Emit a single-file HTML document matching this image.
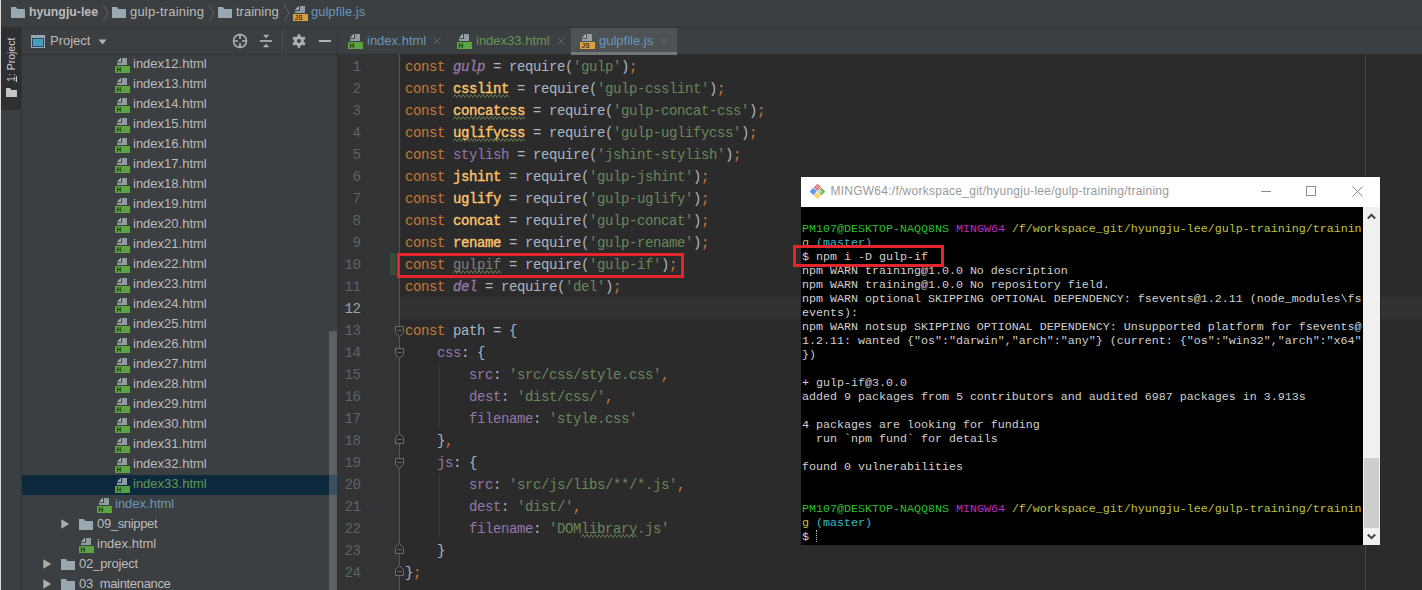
<!DOCTYPE html><html><head><meta charset="utf-8"><title>gulpfile.js</title><style>
*{box-sizing:border-box;margin:0;padding:0}
html,body{width:1422px;height:590px;overflow:hidden;background:#3c3f41}
body{position:relative;font-family:"Liberation Sans","DejaVu Sans",sans-serif;font-size:13px;color:#bbbbbb}
.abs{position:absolute}
#edge{left:0;top:0;width:1px;height:590px;background:#d9d9d9}
#crumbs{left:1px;top:0;width:1421px;height:27px;background:#3c3f41}
#crumbline{left:1px;top:27px;width:1421px;height:1px;background:#323232}
.crumb{position:absolute;top:0;height:24px;line-height:24px;font-size:13px;color:#bbbbbb;white-space:nowrap}
.sep{position:absolute;top:4px}
#strip{left:1px;top:28px;width:20px;height:562px;background:#3c3f41}
#stripsel{left:1px;top:28px;width:20.700px;height:82px;background:#2d2f30}
#striptxt{left:1px;top:28px;width:21px;height:81px}
#striptxt span{position:absolute;left:2.500px;top:54px;transform-origin:0 0;transform:rotate(-90deg);font-size:10.5px;color:#d0d0d0;white-space:nowrap;line-height:15px}
#stripline{left:21px;top:28px;width:1px;height:562px;background:#323232}
#proj{left:22px;top:28px;width:315px;height:562px;background:#3c3f41}
#projhead{left:23px;top:28px;width:314px;height:26px}
#projheadline{left:22px;top:54px;width:315px;height:1px;background:#353739}
.row{position:absolute;left:22px;width:315px;height:20px;line-height:18px;font-size:13px;color:#bbbbbb;white-space:nowrap}
.row.sel{background:#0d293e}
.row .t{position:absolute;top:0}
#scroll{left:329px;top:331px;width:8px;height:259px;background:rgba(166,166,166,0.32)}
#split{left:337px;top:28px;width:1px;height:562px;background:#323232}
#tabs{left:338px;top:28px;width:1084px;height:26px;background:#3c3f41}
#tabline{display:none}
.tab{position:absolute;top:28px;height:26px;line-height:25px;font-size:13px;white-space:nowrap}
.tab .x{position:absolute;top:0}
#editor{left:338px;top:54px;width:1084px;height:536px;background:#2b2b2b}
#gutter{left:338px;top:54px;width:61px;height:536px;background:#313335}
#gutline{left:399px;top:54px;width:1px;height:536px;background:#555555}
#margin{left:1365px;top:54px;width:1px;height:536px;background:#474747}
.ln{position:absolute;left:338px;width:22.400px;text-align:right;height:22px;line-height:22px;font-family:"Liberation Mono","DejaVu Sans Mono",monospace;font-size:14px;letter-spacing:-0.400px;color:#606366}
.cl{position:absolute;left:405px;height:22px;line-height:22px;font-family:"Liberation Mono","DejaVu Sans Mono",monospace;font-size:14px;letter-spacing:-0.4014px;color:#a9b7c6;white-space:pre}
.k{color:#cc7832}.s{color:#6a8759}.p{color:#9876aa}.g{color:#9876aa;font-style:italic;-webkit-text-stroke:0.350px #9876aa}
.y{color:#ffc66d;-webkit-text-stroke:0.350px #ffc66d}.u{color:#808080}
.w{}
#caretrow{left:400px;top:297px;width:1022px;height:22px;background:#323232}
#vcs{left:390px;top:253px;width:6px;height:22px;background:#384c38}
#red1{left:397px;top:252.500px;width:287px;height:25.500px;border:3.500px solid #e3262d}
#term{left:800px;top:176px;width:581px;height:370px;background:#000;border:1px solid #2a2a2a}
#ttitle{left:801px;top:177px;width:579px;height:30px;background:#ffffff}
#ttitle .tt{position:absolute;left:29.400px;top:0;line-height:29px;font-size:12px;letter-spacing:0.260px;color:#999999;white-space:nowrap}
#tbody{left:801px;top:207px;width:562px;height:338px;background:#000}
#tscroll{left:1363px;top:207px;width:17px;height:338px;background:#f0f0f0}
#tthumb{left:1364px;top:458px;width:15px;height:70px;background:#cdcdcd}
.tl{position:absolute;left:802px;height:14px;line-height:14px;font-family:"Liberation Mono","DejaVu Sans Mono",monospace;font-size:11.67px;color:#d0d0d0;white-space:pre}
.tg{color:#2bc02b}.tm{color:#c02bc0}.ty{color:#c2c244}.tc{color:#38bcc6}
#red2{left:793px;top:245px;width:151px;height:22px;border:3.500px solid #e3262d}
</style></head><body>
<div class="abs" id="crumbs"></div><div class="abs" id="crumbline"></div>
<svg class="abs" style="left:11px;top:7px" width="14" height="11" viewBox="0 0 14 11"><path d="M0 0h5l1.500 2H14v9H0z" fill="#9aa7b0"/></svg>
<div class="crumb" style="left:29px;font-weight:bold;font-size:12.3px">hyungju-lee</div>
<svg class="abs" style="left:102px;top:4px" width="7" height="18" viewBox="0 0 7 18"><path d="M1 0.5L6 9L1 17.5" fill="none" stroke="#606264" stroke-width="1"/></svg>
<svg class="abs" style="left:112px;top:7px" width="14" height="11" viewBox="0 0 14 11"><path d="M0 0h5l1.500 2H14v9H0z" fill="#9aa7b0"/></svg>
<div class="crumb" style="left:130px;letter-spacing:0.2px">gulp-training</div>
<svg class="abs" style="left:207.5px;top:4px" width="7" height="18" viewBox="0 0 7 18"><path d="M1 0.5L6 9L1 17.5" fill="none" stroke="#606264" stroke-width="1"/></svg>
<svg class="abs" style="left:218px;top:7px" width="14" height="11" viewBox="0 0 14 11"><path d="M0 0h5l1.500 2H14v9H0z" fill="#9aa7b0"/></svg>
<div class="crumb" style="left:236px">training</div>
<svg class="abs" style="left:283px;top:4px" width="7" height="18" viewBox="0 0 7 18"><path d="M1 0.5L6 9L1 17.5" fill="none" stroke="#606264" stroke-width="1"/></svg>
<svg class="abs" style="left:292px;top:5px" width="16" height="16" viewBox="0 0 16 16"><path d="M8 1H13v7H3V5.800h5z" fill="#9aa7b0" opacity=".9"/><path d="M3 4.800L7 0.800V4.800z" fill="#aeb8bf"/><rect x="1" y="9" width="15" height="7" fill="#f4af3d" opacity=".85"/><text x="2.600" y="15" font-family="Liberation Sans,sans-serif" font-size="6.500" font-weight="bold" fill="#4a3510">JS</text></svg>
<div class="crumb" style="left:311px;color:#6897bb">gulpfile.js</div>
<div class="abs" id="strip"></div><div class="abs" id="stripsel"></div>
<div class="abs" id="striptxt"><span><u>1</u>: Project</span></div>
<svg class="abs" style="left:6px;top:88px" width="11" height="9" viewBox="0 0 11 9"><path d="M0 0h4l1.500 2H11v7H0z" fill="#c4c4c4"/></svg>
<div class="abs" id="stripline"></div>
<div class="abs" id="proj"></div><div class="abs" id="projheadline"></div>
<svg class="abs" style="left:31px;top:35px" width="14" height="13" viewBox="0 0 14 13"><rect x="0" y="0" width="14" height="13" fill="#9aa7b0"/><rect x="1" y="3" width="12" height="9" fill="#234d60"/><rect x="2" y="4" width="10" height="7" fill="#4a9dbd"/></svg>
<div class="abs" style="left:50px;top:28px;line-height:26px;font-size:13px;color:#bbbbbb">Project</div>
<svg class="abs" style="left:98px;top:39px" width="10" height="6" viewBox="0 0 10 6"><path d="M0.5 0.5h8l-4 5z" fill="#afb1b3"/></svg>
<svg class="abs" style="left:232px;top:33px" width="16" height="16" viewBox="0 0 16 16"><circle cx="8" cy="8" r="6.500" fill="none" stroke="#afb1b3" stroke-width="1.500"/><path d="M8 1.500v4.500M8 10v4.500M1.500 8h4.500M10 8h4.500" stroke="#afb1b3" stroke-width="1.700"/></svg>
<svg class="abs" style="left:258px;top:33px" width="16" height="16" viewBox="0 0 16 16"><path d="M2 8h12" stroke="#afb1b3" stroke-width="1.700"/><path d="M5 1.800h6.200l-3.100 3.400z M5 14.200h6.200l-3.100-3.400z" fill="#afb1b3"/></svg>
<div class="abs" style="left:282px;top:30px;width:1px;height:21px;background:#505254"></div>
<svg class="abs" style="left:291px;top:33px" width="16" height="16" viewBox="0 0 16 16"><g transform="translate(8 8)"><circle r="3.400" fill="none" stroke="#afb1b3" stroke-width="2.800"/><g fill="#afb1b3"><path d="M-1.900 -4.300L-1.100 -6.850H1.100L1.900 -4.300z" transform="rotate(0)"/><path d="M-1.900 -4.300L-1.100 -6.850H1.100L1.900 -4.300z" transform="rotate(60)"/><path d="M-1.900 -4.300L-1.100 -6.850H1.100L1.900 -4.300z" transform="rotate(120)"/><path d="M-1.900 -4.300L-1.100 -6.850H1.100L1.900 -4.300z" transform="rotate(180)"/><path d="M-1.900 -4.300L-1.100 -6.850H1.100L1.900 -4.300z" transform="rotate(240)"/><path d="M-1.900 -4.300L-1.100 -6.850H1.100L1.900 -4.300z" transform="rotate(300)"/></g></g></svg>
<div class="abs" style="left:319px;top:40px;width:12px;height:2px;background:#afb1b3"></div>
<div class="row" style="top:55px"><span class="t" style="left:111px;">index12.html</span></div>
<svg class="abs" style="left:114px;top:57px" width="16" height="16" viewBox="0 0 16 16"><path d="M8 1H13v7H3V5.800h5z" fill="#9aa7b0" opacity=".9"/><path d="M3 4.800L7 0.800V4.800z" fill="#aeb8bf"/><rect x="1" y="9" width="15" height="7" fill="#62b543" opacity=".85"/><text x="2.600" y="15" font-family="Liberation Sans,sans-serif" font-size="6.500" font-weight="bold" fill="#1a4210">H</text></svg>
<div class="row" style="top:75px"><span class="t" style="left:111px;">index13.html</span></div>
<svg class="abs" style="left:114px;top:77px" width="16" height="16" viewBox="0 0 16 16"><path d="M8 1H13v7H3V5.800h5z" fill="#9aa7b0" opacity=".9"/><path d="M3 4.800L7 0.800V4.800z" fill="#aeb8bf"/><rect x="1" y="9" width="15" height="7" fill="#62b543" opacity=".85"/><text x="2.600" y="15" font-family="Liberation Sans,sans-serif" font-size="6.500" font-weight="bold" fill="#1a4210">H</text></svg>
<div class="row" style="top:95px"><span class="t" style="left:111px;">index14.html</span></div>
<svg class="abs" style="left:114px;top:97px" width="16" height="16" viewBox="0 0 16 16"><path d="M8 1H13v7H3V5.800h5z" fill="#9aa7b0" opacity=".9"/><path d="M3 4.800L7 0.800V4.800z" fill="#aeb8bf"/><rect x="1" y="9" width="15" height="7" fill="#62b543" opacity=".85"/><text x="2.600" y="15" font-family="Liberation Sans,sans-serif" font-size="6.500" font-weight="bold" fill="#1a4210">H</text></svg>
<div class="row" style="top:115px"><span class="t" style="left:111px;">index15.html</span></div>
<svg class="abs" style="left:114px;top:117px" width="16" height="16" viewBox="0 0 16 16"><path d="M8 1H13v7H3V5.800h5z" fill="#9aa7b0" opacity=".9"/><path d="M3 4.800L7 0.800V4.800z" fill="#aeb8bf"/><rect x="1" y="9" width="15" height="7" fill="#62b543" opacity=".85"/><text x="2.600" y="15" font-family="Liberation Sans,sans-serif" font-size="6.500" font-weight="bold" fill="#1a4210">H</text></svg>
<div class="row" style="top:135px"><span class="t" style="left:111px;">index16.html</span></div>
<svg class="abs" style="left:114px;top:137px" width="16" height="16" viewBox="0 0 16 16"><path d="M8 1H13v7H3V5.800h5z" fill="#9aa7b0" opacity=".9"/><path d="M3 4.800L7 0.800V4.800z" fill="#aeb8bf"/><rect x="1" y="9" width="15" height="7" fill="#62b543" opacity=".85"/><text x="2.600" y="15" font-family="Liberation Sans,sans-serif" font-size="6.500" font-weight="bold" fill="#1a4210">H</text></svg>
<div class="row" style="top:155px"><span class="t" style="left:111px;">index17.html</span></div>
<svg class="abs" style="left:114px;top:157px" width="16" height="16" viewBox="0 0 16 16"><path d="M8 1H13v7H3V5.800h5z" fill="#9aa7b0" opacity=".9"/><path d="M3 4.800L7 0.800V4.800z" fill="#aeb8bf"/><rect x="1" y="9" width="15" height="7" fill="#62b543" opacity=".85"/><text x="2.600" y="15" font-family="Liberation Sans,sans-serif" font-size="6.500" font-weight="bold" fill="#1a4210">H</text></svg>
<div class="row" style="top:175px"><span class="t" style="left:111px;">index18.html</span></div>
<svg class="abs" style="left:114px;top:177px" width="16" height="16" viewBox="0 0 16 16"><path d="M8 1H13v7H3V5.800h5z" fill="#9aa7b0" opacity=".9"/><path d="M3 4.800L7 0.800V4.800z" fill="#aeb8bf"/><rect x="1" y="9" width="15" height="7" fill="#62b543" opacity=".85"/><text x="2.600" y="15" font-family="Liberation Sans,sans-serif" font-size="6.500" font-weight="bold" fill="#1a4210">H</text></svg>
<div class="row" style="top:195px"><span class="t" style="left:111px;">index19.html</span></div>
<svg class="abs" style="left:114px;top:197px" width="16" height="16" viewBox="0 0 16 16"><path d="M8 1H13v7H3V5.800h5z" fill="#9aa7b0" opacity=".9"/><path d="M3 4.800L7 0.800V4.800z" fill="#aeb8bf"/><rect x="1" y="9" width="15" height="7" fill="#62b543" opacity=".85"/><text x="2.600" y="15" font-family="Liberation Sans,sans-serif" font-size="6.500" font-weight="bold" fill="#1a4210">H</text></svg>
<div class="row" style="top:215px"><span class="t" style="left:111px;">index20.html</span></div>
<svg class="abs" style="left:114px;top:217px" width="16" height="16" viewBox="0 0 16 16"><path d="M8 1H13v7H3V5.800h5z" fill="#9aa7b0" opacity=".9"/><path d="M3 4.800L7 0.800V4.800z" fill="#aeb8bf"/><rect x="1" y="9" width="15" height="7" fill="#62b543" opacity=".85"/><text x="2.600" y="15" font-family="Liberation Sans,sans-serif" font-size="6.500" font-weight="bold" fill="#1a4210">H</text></svg>
<div class="row" style="top:235px"><span class="t" style="left:111px;">index21.html</span></div>
<svg class="abs" style="left:114px;top:237px" width="16" height="16" viewBox="0 0 16 16"><path d="M8 1H13v7H3V5.800h5z" fill="#9aa7b0" opacity=".9"/><path d="M3 4.800L7 0.800V4.800z" fill="#aeb8bf"/><rect x="1" y="9" width="15" height="7" fill="#62b543" opacity=".85"/><text x="2.600" y="15" font-family="Liberation Sans,sans-serif" font-size="6.500" font-weight="bold" fill="#1a4210">H</text></svg>
<div class="row" style="top:255px"><span class="t" style="left:111px;">index22.html</span></div>
<svg class="abs" style="left:114px;top:257px" width="16" height="16" viewBox="0 0 16 16"><path d="M8 1H13v7H3V5.800h5z" fill="#9aa7b0" opacity=".9"/><path d="M3 4.800L7 0.800V4.800z" fill="#aeb8bf"/><rect x="1" y="9" width="15" height="7" fill="#62b543" opacity=".85"/><text x="2.600" y="15" font-family="Liberation Sans,sans-serif" font-size="6.500" font-weight="bold" fill="#1a4210">H</text></svg>
<div class="row" style="top:275px"><span class="t" style="left:111px;">index23.html</span></div>
<svg class="abs" style="left:114px;top:277px" width="16" height="16" viewBox="0 0 16 16"><path d="M8 1H13v7H3V5.800h5z" fill="#9aa7b0" opacity=".9"/><path d="M3 4.800L7 0.800V4.800z" fill="#aeb8bf"/><rect x="1" y="9" width="15" height="7" fill="#62b543" opacity=".85"/><text x="2.600" y="15" font-family="Liberation Sans,sans-serif" font-size="6.500" font-weight="bold" fill="#1a4210">H</text></svg>
<div class="row" style="top:295px"><span class="t" style="left:111px;">index24.html</span></div>
<svg class="abs" style="left:114px;top:297px" width="16" height="16" viewBox="0 0 16 16"><path d="M8 1H13v7H3V5.800h5z" fill="#9aa7b0" opacity=".9"/><path d="M3 4.800L7 0.800V4.800z" fill="#aeb8bf"/><rect x="1" y="9" width="15" height="7" fill="#62b543" opacity=".85"/><text x="2.600" y="15" font-family="Liberation Sans,sans-serif" font-size="6.500" font-weight="bold" fill="#1a4210">H</text></svg>
<div class="row" style="top:315px"><span class="t" style="left:111px;">index25.html</span></div>
<svg class="abs" style="left:114px;top:317px" width="16" height="16" viewBox="0 0 16 16"><path d="M8 1H13v7H3V5.800h5z" fill="#9aa7b0" opacity=".9"/><path d="M3 4.800L7 0.800V4.800z" fill="#aeb8bf"/><rect x="1" y="9" width="15" height="7" fill="#62b543" opacity=".85"/><text x="2.600" y="15" font-family="Liberation Sans,sans-serif" font-size="6.500" font-weight="bold" fill="#1a4210">H</text></svg>
<div class="row" style="top:335px"><span class="t" style="left:111px;">index26.html</span></div>
<svg class="abs" style="left:114px;top:337px" width="16" height="16" viewBox="0 0 16 16"><path d="M8 1H13v7H3V5.800h5z" fill="#9aa7b0" opacity=".9"/><path d="M3 4.800L7 0.800V4.800z" fill="#aeb8bf"/><rect x="1" y="9" width="15" height="7" fill="#62b543" opacity=".85"/><text x="2.600" y="15" font-family="Liberation Sans,sans-serif" font-size="6.500" font-weight="bold" fill="#1a4210">H</text></svg>
<div class="row" style="top:355px"><span class="t" style="left:111px;">index27.html</span></div>
<svg class="abs" style="left:114px;top:357px" width="16" height="16" viewBox="0 0 16 16"><path d="M8 1H13v7H3V5.800h5z" fill="#9aa7b0" opacity=".9"/><path d="M3 4.800L7 0.800V4.800z" fill="#aeb8bf"/><rect x="1" y="9" width="15" height="7" fill="#62b543" opacity=".85"/><text x="2.600" y="15" font-family="Liberation Sans,sans-serif" font-size="6.500" font-weight="bold" fill="#1a4210">H</text></svg>
<div class="row" style="top:375px"><span class="t" style="left:111px;">index28.html</span></div>
<svg class="abs" style="left:114px;top:377px" width="16" height="16" viewBox="0 0 16 16"><path d="M8 1H13v7H3V5.800h5z" fill="#9aa7b0" opacity=".9"/><path d="M3 4.800L7 0.800V4.800z" fill="#aeb8bf"/><rect x="1" y="9" width="15" height="7" fill="#62b543" opacity=".85"/><text x="2.600" y="15" font-family="Liberation Sans,sans-serif" font-size="6.500" font-weight="bold" fill="#1a4210">H</text></svg>
<div class="row" style="top:395px"><span class="t" style="left:111px;">index29.html</span></div>
<svg class="abs" style="left:114px;top:397px" width="16" height="16" viewBox="0 0 16 16"><path d="M8 1H13v7H3V5.800h5z" fill="#9aa7b0" opacity=".9"/><path d="M3 4.800L7 0.800V4.800z" fill="#aeb8bf"/><rect x="1" y="9" width="15" height="7" fill="#62b543" opacity=".85"/><text x="2.600" y="15" font-family="Liberation Sans,sans-serif" font-size="6.500" font-weight="bold" fill="#1a4210">H</text></svg>
<div class="row" style="top:415px"><span class="t" style="left:111px;">index30.html</span></div>
<svg class="abs" style="left:114px;top:417px" width="16" height="16" viewBox="0 0 16 16"><path d="M8 1H13v7H3V5.800h5z" fill="#9aa7b0" opacity=".9"/><path d="M3 4.800L7 0.800V4.800z" fill="#aeb8bf"/><rect x="1" y="9" width="15" height="7" fill="#62b543" opacity=".85"/><text x="2.600" y="15" font-family="Liberation Sans,sans-serif" font-size="6.500" font-weight="bold" fill="#1a4210">H</text></svg>
<div class="row" style="top:435px"><span class="t" style="left:111px;">index31.html</span></div>
<svg class="abs" style="left:114px;top:437px" width="16" height="16" viewBox="0 0 16 16"><path d="M8 1H13v7H3V5.800h5z" fill="#9aa7b0" opacity=".9"/><path d="M3 4.800L7 0.800V4.800z" fill="#aeb8bf"/><rect x="1" y="9" width="15" height="7" fill="#62b543" opacity=".85"/><text x="2.600" y="15" font-family="Liberation Sans,sans-serif" font-size="6.500" font-weight="bold" fill="#1a4210">H</text></svg>
<div class="row" style="top:455px"><span class="t" style="left:111px;">index32.html</span></div>
<svg class="abs" style="left:114px;top:457px" width="16" height="16" viewBox="0 0 16 16"><path d="M8 1H13v7H3V5.800h5z" fill="#9aa7b0" opacity=".9"/><path d="M3 4.800L7 0.800V4.800z" fill="#aeb8bf"/><rect x="1" y="9" width="15" height="7" fill="#62b543" opacity=".85"/><text x="2.600" y="15" font-family="Liberation Sans,sans-serif" font-size="6.500" font-weight="bold" fill="#1a4210">H</text></svg>
<div class="row sel" style="top:475px"><span class="t" style="left:111px;color:#629755">index33.html</span></div>
<svg class="abs" style="left:114px;top:477px" width="16" height="16" viewBox="0 0 16 16"><path d="M8 1H13v7H3V5.800h5z" fill="#9aa7b0" opacity=".9"/><path d="M3 4.800L7 0.800V4.800z" fill="#aeb8bf"/><rect x="1" y="9" width="15" height="7" fill="#62b543" opacity=".85"/><text x="2.600" y="15" font-family="Liberation Sans,sans-serif" font-size="6.500" font-weight="bold" fill="#1a4210">H</text></svg>
<div class="row" style="top:495px"><span class="t" style="left:93px;color:#6897bb;">index.html</span></div>
<svg class="abs" style="left:96px;top:497px" width="16" height="16" viewBox="0 0 16 16"><path d="M8 1H13v7H3V5.800h5z" fill="#9aa7b0" opacity=".9"/><path d="M3 4.800L7 0.800V4.800z" fill="#aeb8bf"/><rect x="1" y="9" width="15" height="7" fill="#62b543" opacity=".85"/><text x="2.600" y="15" font-family="Liberation Sans,sans-serif" font-size="6.500" font-weight="bold" fill="#1a4210">H</text></svg>
<div class="row" style="top:515px"><span class="t" style="left:75px;letter-spacing:-0.34px">09_snippet</span></div>
<svg class="abs" style="left:79px;top:519px" width="14" height="11" viewBox="0 0 14 11"><path d="M0 0h5l1.500 2H14v9H0z" fill="#9aa7b0"/></svg>
<svg class="abs" style="left:61px;top:519px" width="9" height="10" viewBox="0 0 9 10"><path d="M0.300 0.300l7.900 4.700l-7.900 4.700z" fill="#adadad"/></svg>
<div class="row" style="top:535px"><span class="t" style="left:75px;">index.html</span></div>
<svg class="abs" style="left:78px;top:537px" width="16" height="16" viewBox="0 0 16 16"><path d="M8 1H13v7H3V5.800h5z" fill="#9aa7b0" opacity=".9"/><path d="M3 4.800L7 0.800V4.800z" fill="#aeb8bf"/><rect x="1" y="9" width="15" height="7" fill="#62b543" opacity=".85"/><text x="2.600" y="15" font-family="Liberation Sans,sans-serif" font-size="6.500" font-weight="bold" fill="#1a4210">H</text></svg>
<div class="row" style="top:555px"><span class="t" style="left:57px;letter-spacing:-0.17px">02_project</span></div>
<svg class="abs" style="left:61px;top:559px" width="14" height="11" viewBox="0 0 14 11"><path d="M0 0h5l1.500 2H14v9H0z" fill="#9aa7b0"/></svg>
<svg class="abs" style="left:43px;top:559px" width="9" height="10" viewBox="0 0 9 10"><path d="M0.300 0.300l7.900 4.700l-7.900 4.700z" fill="#adadad"/></svg>
<div class="row" style="top:575px"><span class="t" style="left:57px;letter-spacing:-0.33px">03_maintenance</span></div>
<svg class="abs" style="left:61px;top:579px" width="14" height="11" viewBox="0 0 14 11"><path d="M0 0h5l1.500 2H14v9H0z" fill="#9aa7b0"/></svg>
<svg class="abs" style="left:43px;top:579px" width="9" height="10" viewBox="0 0 9 10"><path d="M0.300 0.300l7.900 4.700l-7.900 4.700z" fill="#adadad"/></svg>
<div class="abs" id="scroll"></div><div class="abs" id="split"></div>
<div class="abs" id="tabs"></div>
<div class="abs" style="left:571px;top:28px;width:106px;height:24px;background:#4e5254"></div>
<div class="abs" style="left:571px;top:52px;width:106px;height:3px;background:#72777c;z-index:2"></div>
<div class="abs" id="tabline"></div>
<svg class="abs" style="left:347px;top:33px" width="16" height="16" viewBox="0 0 16 16"><path d="M8 1H13v7H3V5.800h5z" fill="#9aa7b0" opacity=".9"/><path d="M3 4.800L7 0.800V4.800z" fill="#aeb8bf"/><rect x="1" y="9" width="15" height="7" fill="#62b543" opacity=".85"/><text x="2.600" y="15" font-family="Liberation Sans,sans-serif" font-size="6.500" font-weight="bold" fill="#1a4210">H</text></svg>
<div class="tab" style="left:367px;color:#6897bb">index.html</div>
<svg class="abs" style="left:433px;top:37px" width="8" height="8" viewBox="0 0 8 8"><path d="M0.500 0.500l7 7M7.500 0.500l-7 7" stroke="#63666a" stroke-width="1"/></svg>
<svg class="abs" style="left:456px;top:33px" width="16" height="16" viewBox="0 0 16 16"><path d="M8 1H13v7H3V5.800h5z" fill="#9aa7b0" opacity=".9"/><path d="M3 4.800L7 0.800V4.800z" fill="#aeb8bf"/><rect x="1" y="9" width="15" height="7" fill="#62b543" opacity=".85"/><text x="2.600" y="15" font-family="Liberation Sans,sans-serif" font-size="6.500" font-weight="bold" fill="#1a4210">H</text></svg>
<div class="tab" style="left:476px;color:#629755">index33.html</div>
<svg class="abs" style="left:557px;top:37px" width="8" height="8" viewBox="0 0 8 8"><path d="M0.500 0.500l7 7M7.500 0.500l-7 7" stroke="#63666a" stroke-width="1"/></svg>
<svg class="abs" style="left:579px;top:33px" width="16" height="16" viewBox="0 0 16 16"><path d="M8 1H13v7H3V5.800h5z" fill="#9aa7b0" opacity=".9"/><path d="M3 4.800L7 0.800V4.800z" fill="#aeb8bf"/><rect x="1" y="9" width="15" height="7" fill="#f4af3d" opacity=".85"/><text x="2.600" y="15" font-family="Liberation Sans,sans-serif" font-size="6.500" font-weight="bold" fill="#4a3510">JS</text></svg>
<div class="tab" style="left:599px;color:#6897bb">gulpfile.js</div>
<svg class="abs" style="left:660px;top:37px" width="8" height="8" viewBox="0 0 8 8"><path d="M0.500 0.500l7 7M7.500 0.500l-7 7" stroke="#63666a" stroke-width="1"/></svg>
<div class="abs" id="editor"></div><div class="abs" id="gutter"></div><div class="abs" id="caretrow"></div><div class="abs" id="gutline"></div><div class="abs" id="margin"></div><div class="abs" id="vcs"></div>
<div class="ln" style="top:56px">1</div>
<div class="cl" style="top:56px"><span class="k">const</span> <span class="g">gulp</span> = require(<span class="s">'gulp'</span>)<span class="k">;</span></div>
<div class="ln" style="top:78px">2</div>
<div class="cl" style="top:78px"><span class="k">const</span> <span class="y w">csslint</span> = require(<span class="s">'gulp-csslint'</span>)<span class="k">;</span></div>
<div class="ln" style="top:100px">3</div>
<div class="cl" style="top:100px"><span class="k">const</span> <span class="y w">concatcss</span> = require(<span class="s">'gulp-concat-css'</span>)<span class="k">;</span></div>
<div class="ln" style="top:122px">4</div>
<div class="cl" style="top:122px"><span class="k">const</span> <span class="y w">uglifycss</span> = require(<span class="s">'gulp-uglifycss'</span>)<span class="k">;</span></div>
<div class="ln" style="top:144px">5</div>
<div class="cl" style="top:144px"><span class="k">const</span> <span class="p">stylish</span> = require(<span class="s">'jshint-stylish'</span>)<span class="k">;</span></div>
<div class="ln" style="top:166px">6</div>
<div class="cl" style="top:166px"><span class="k">const</span> <span class="y">jshint</span> = require(<span class="s">'gulp-jshint'</span>)<span class="k">;</span></div>
<div class="ln" style="top:188px">7</div>
<div class="cl" style="top:188px"><span class="k">const</span> <span class="y">uglify</span> = require(<span class="s">'gulp-uglify'</span>)<span class="k">;</span></div>
<div class="ln" style="top:210px">8</div>
<div class="cl" style="top:210px"><span class="k">const</span> <span class="y">concat</span> = require(<span class="s">'gulp-concat'</span>)<span class="k">;</span></div>
<div class="ln" style="top:232px">9</div>
<div class="cl" style="top:232px"><span class="k">const</span> <span class="y">rename</span> = require(<span class="s">'gulp-rename'</span>)<span class="k">;</span></div>
<div class="ln" style="top:254px">10</div>
<div class="cl" style="top:254px"><span class="k">const</span> <span class="u w">gulpif</span> = require(<span class="s">'gulp-if'</span>)<span class="k">;</span></div>
<div class="ln" style="top:276px">11</div>
<div class="cl" style="top:276px"><span class="k">const</span> <span class="g">del</span> = require(<span class="s">'del'</span>)<span class="k">;</span></div>
<div class="ln" style="top:298px;color:#a4a3a3">12</div>
<div class="ln" style="top:320px">13</div>
<div class="cl" style="top:320px"><span class="k">const</span> path = {</div>
<div class="ln" style="top:342px">14</div>
<div class="cl" style="top:342px">    <span class="p">css</span>: {</div>
<div class="ln" style="top:364px">15</div>
<div class="cl" style="top:364px">        <span class="p">src</span>: <span class="s">'src/css/style.css'</span><span class="k">,</span></div>
<div class="ln" style="top:386px">16</div>
<div class="cl" style="top:386px">        <span class="p">dest</span>: <span class="s">'dist/css/'</span><span class="k">,</span></div>
<div class="ln" style="top:408px">17</div>
<div class="cl" style="top:408px">        <span class="p">filename</span>: <span class="s">'style.css'</span></div>
<div class="ln" style="top:430px">18</div>
<div class="cl" style="top:430px">    }<span class="k">,</span></div>
<div class="ln" style="top:452px">19</div>
<div class="cl" style="top:452px">    <span class="p">js</span>: {</div>
<div class="ln" style="top:474px">20</div>
<div class="cl" style="top:474px">        <span class="p">src</span>: <span class="s">'src/js/libs/**/*.js'</span><span class="k">,</span></div>
<div class="ln" style="top:496px">21</div>
<div class="cl" style="top:496px">        <span class="p">dest</span>: <span class="s">'dist/'</span><span class="k">,</span></div>
<div class="ln" style="top:518px">22</div>
<div class="cl" style="top:518px">        <span class="p">filename</span>: <span class="s">'DOM<span class="w">library</span>.js'</span></div>
<div class="ln" style="top:540px">23</div>
<div class="cl" style="top:540px">    }</div>
<div class="ln" style="top:562px">24</div>
<div class="cl" style="top:562px">}<span class="k">;</span></div>
<svg class="abs" style="left:453px;top:94px" width="56" height="4" viewBox="0 0 56 4"><path d="M0 3.500 L2 0.500 L4 3.500 L6 0.500 L8 3.500 L10 0.500 L12 3.500 L14 0.500 L16 3.500 L18 0.500 L20 3.500 L22 0.500 L24 3.500 L26 0.500 L28 3.500 L30 0.500 L32 3.500 L34 0.500 L36 3.500 L38 0.500 L40 3.500 L42 0.500 L44 3.500 L46 0.500 L48 3.500 L50 0.500 L52 3.500 L54 0.500 L56 3.500" fill="none" stroke="#64794f" stroke-width="1"/></svg>
<svg class="abs" style="left:453px;top:116px" width="72" height="4" viewBox="0 0 72 4"><path d="M0 3.500 L2 0.500 L4 3.500 L6 0.500 L8 3.500 L10 0.500 L12 3.500 L14 0.500 L16 3.500 L18 0.500 L20 3.500 L22 0.500 L24 3.500 L26 0.500 L28 3.500 L30 0.500 L32 3.500 L34 0.500 L36 3.500 L38 0.500 L40 3.500 L42 0.500 L44 3.500 L46 0.500 L48 3.500 L50 0.500 L52 3.500 L54 0.500 L56 3.500 L58 0.500 L60 3.500 L62 0.500 L64 3.500 L66 0.500 L68 3.500 L70 0.500 L72 3.500" fill="none" stroke="#64794f" stroke-width="1"/></svg>
<svg class="abs" style="left:453px;top:138px" width="72" height="4" viewBox="0 0 72 4"><path d="M0 3.500 L2 0.500 L4 3.500 L6 0.500 L8 3.500 L10 0.500 L12 3.500 L14 0.500 L16 3.500 L18 0.500 L20 3.500 L22 0.500 L24 3.500 L26 0.500 L28 3.500 L30 0.500 L32 3.500 L34 0.500 L36 3.500 L38 0.500 L40 3.500 L42 0.500 L44 3.500 L46 0.500 L48 3.500 L50 0.500 L52 3.500 L54 0.500 L56 3.500 L58 0.500 L60 3.500 L62 0.500 L64 3.500 L66 0.500 L68 3.500 L70 0.500 L72 3.500" fill="none" stroke="#64794f" stroke-width="1"/></svg>
<svg class="abs" style="left:453px;top:270px" width="48" height="4" viewBox="0 0 48 4"><path d="M0 3.500 L2 0.500 L4 3.500 L6 0.500 L8 3.500 L10 0.500 L12 3.500 L14 0.500 L16 3.500 L18 0.500 L20 3.500 L22 0.500 L24 3.500 L26 0.500 L28 3.500 L30 0.500 L32 3.500 L34 0.500 L36 3.500 L38 0.500 L40 3.500 L42 0.500 L44 3.500 L46 0.500 L48 3.500" fill="none" stroke="#64794f" stroke-width="1"/></svg>
<svg class="abs" style="left:581px;top:534px" width="56" height="4" viewBox="0 0 56 4"><path d="M0 3.500 L2 0.500 L4 3.500 L6 0.500 L8 3.500 L10 0.500 L12 3.500 L14 0.500 L16 3.500 L18 0.500 L20 3.500 L22 0.500 L24 3.500 L26 0.500 L28 3.500 L30 0.500 L32 3.500 L34 0.500 L36 3.500 L38 0.500 L40 3.500 L42 0.500 L44 3.500 L46 0.500 L48 3.500 L50 0.500 L52 3.500 L54 0.500 L56 3.500" fill="none" stroke="#64794f" stroke-width="1"/></svg>
<div class="abs" style="left:439px;top:363px;width:1px;height:65px;background:#393939"></div>
<div class="abs" style="left:439px;top:473px;width:1px;height:65px;background:#393939"></div>
<svg class="abs" style="left:395px;top:326px" width="9" height="11" viewBox="0 0 9 11"><path d="M0.500 0.500h8v6l-4 4l-4-4z" fill="#2b2b2b" stroke="#6c6c6c"/><path d="M2.500 4.500h4" stroke="#6c6c6c"/></svg>
<svg class="abs" style="left:395px;top:348px" width="9" height="11" viewBox="0 0 9 11"><path d="M0.500 0.500h8v6l-4 4l-4-4z" fill="#2b2b2b" stroke="#6c6c6c"/><path d="M2.500 4.500h4" stroke="#6c6c6c"/></svg>
<svg class="abs" style="left:395px;top:433px" width="9" height="11" viewBox="0 0 9 11"><path d="M0.500 10.500h8v-6l-4-4l-4 4z" fill="#2b2b2b" stroke="#6c6c6c"/><path d="M2.500 6.500h4" stroke="#6c6c6c"/></svg>
<svg class="abs" style="left:395px;top:458px" width="9" height="11" viewBox="0 0 9 11"><path d="M0.500 0.500h8v6l-4 4l-4-4z" fill="#2b2b2b" stroke="#6c6c6c"/><path d="M2.500 4.500h4" stroke="#6c6c6c"/></svg>
<svg class="abs" style="left:395px;top:543px" width="9" height="11" viewBox="0 0 9 11"><path d="M0.500 10.500h8v-6l-4-4l-4 4z" fill="#2b2b2b" stroke="#6c6c6c"/><path d="M2.500 6.500h4" stroke="#6c6c6c"/></svg>
<svg class="abs" style="left:395px;top:565px" width="9" height="11" viewBox="0 0 9 11"><path d="M0.500 10.500h8v-6l-4-4l-4 4z" fill="#2b2b2b" stroke="#6c6c6c"/><path d="M2.500 6.500h4" stroke="#6c6c6c"/></svg>
<div class="abs" id="red1"></div>
<div class="abs" id="term"></div><div class="abs" id="ttitle">
<svg class="abs" style="left:8px;top:5.500px" width="17" height="17" viewBox="0 0 17 17"><g transform="rotate(45 8.500 8.500)" opacity=".92"><rect x="2.900" y="2.900" width="5.300" height="5.300" rx="0.800" fill="#dd6b72"/><rect x="8.800" y="2.900" width="5.300" height="5.300" rx="0.800" fill="#72b052"/><rect x="2.900" y="8.800" width="5.300" height="5.300" rx="0.800" fill="#5a90ea"/><rect x="8.800" y="8.800" width="5.300" height="5.300" rx="0.800" fill="#f7d668"/><circle cx="10.600" cy="6.400" r="1.100" fill="#e6f4dc"/><path d="M4 5.500h3.500M8.500 5.500v3" stroke="#ffffff" stroke-width="0.900" opacity=".8"/></g></svg>
<span class="tt">MINGW64:/f/workspace_git/hyungju-lee/gulp-training/training</span>
<div class="abs" style="left:460px;top:14px;width:10px;height:1px;background:#8c8c8c"></div>
<div class="abs" style="left:505px;top:9px;width:10px;height:10px;border:1px solid #8c8c8c"></div>
<svg class="abs" style="left:551px;top:9px" width="11" height="11" viewBox="0 0 11 11"><path d="M0.500 0.500l10 10M10.500 0.500l-10 10" stroke="#8c8c8c" stroke-width="1"/></svg>
</div>
<div class="abs" id="tbody"></div><div class="abs" id="tscroll"></div><div class="abs" id="tthumb"></div>
<svg class="abs" style="left:1367px;top:213px" width="9" height="7" viewBox="0 0 9 7"><path d="M0.800 5.500l3.700-3.700l3.700 3.700" fill="none" stroke="#404040" stroke-width="2"/></svg>
<svg class="abs" style="left:1367px;top:533px" width="9" height="7" viewBox="0 0 9 7"><path d="M0.800 1.500l3.700 3.700l3.700-3.700" fill="none" stroke="#404040" stroke-width="2"/></svg>
<div class="tl" style="top:222px"><span class="tg">PM107@DESKTOP-NAQQ8NS</span> <span class="tm">MINGW64</span> <span class="ty">/f/workspace_git/hyungju-lee/gulp-training/trainin</span></div>
<div class="tl" style="top:236px"><span class="ty">g</span> <span class="tc">(master)</span></div>
<div class="tl" style="top:250px">$ npm i -D gulp-if</div>
<div class="tl" style="top:264px">npm WARN training@1.0.0 No description</div>
<div class="tl" style="top:278px">npm WARN training@1.0.0 No repository field.</div>
<div class="tl" style="top:292px">npm WARN optional SKIPPING OPTIONAL DEPENDENCY: fsevents@1.2.11 (node_modules\fs</div>
<div class="tl" style="top:306px">events):</div>
<div class="tl" style="top:320px">npm WARN notsup SKIPPING OPTIONAL DEPENDENCY: Unsupported platform for fsevents@</div>
<div class="tl" style="top:334px">1.2.11: wanted {"os":"darwin","arch":"any"} (current: {"os":"win32","arch":"x64"</div>
<div class="tl" style="top:348px">})</div>
<div class="tl" style="top:376px">+ gulp-if@3.0.0</div>
<div class="tl" style="top:390px">added 9 packages from 5 contributors and audited 6987 packages in 3.913s</div>
<div class="tl" style="top:418px">4 packages are looking for funding</div>
<div class="tl" style="top:432px">  run `npm fund` for details</div>
<div class="tl" style="top:460px">found 0 vulnerabilities</div>
<div class="tl" style="top:502px"><span class="tg">PM107@DESKTOP-NAQQ8NS</span> <span class="tm">MINGW64</span> <span class="ty">/f/workspace_git/hyungju-lee/gulp-training/trainin</span></div>
<div class="tl" style="top:516px"><span class="ty">g</span> <span class="tc">(master)</span></div>
<div class="tl" style="top:530px">$</div>
<div class="abs" style="left:816px;top:530px;width:1px;height:12px;border-left:1px dotted #bbb"></div>
<div class="abs" id="red2"></div>
<div class="abs" id="edge"></div>
</body></html>
